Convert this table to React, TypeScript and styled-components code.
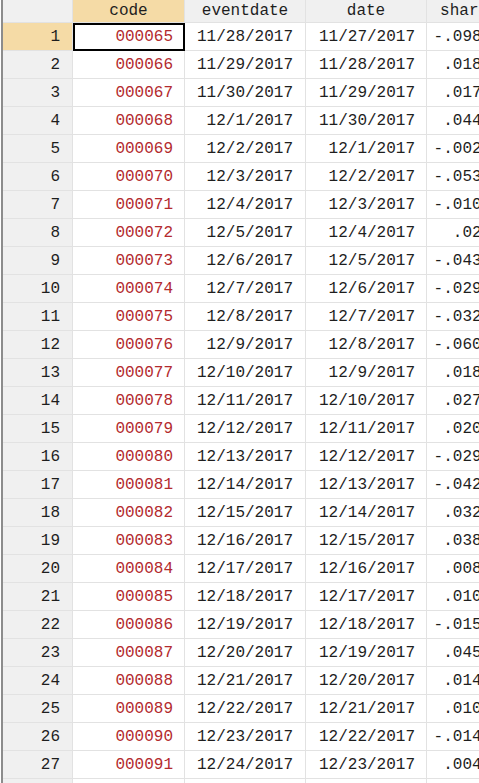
import React from "react";
import styled, { createGlobalStyle } from "styled-components";

const GlobalStyle = createGlobalStyle`
  html, body {
    margin: 0;
    padding: 0;
    background: #ffffff;
    overflow: hidden;
  }
`;

interface Row {
  code: string;
  eventdate: string;
  date: string;
  share: string;
}

const rows: Row[] = [
  { code: "000065", eventdate: "11/28/2017", date: "11/27/2017", share: "-.0987231" },
  { code: "000066", eventdate: "11/29/2017", date: "11/28/2017", share: ".0184562" },
  { code: "000067", eventdate: "11/30/2017", date: "11/29/2017", share: ".0172935" },
  { code: "000068", eventdate: "12/1/2017", date: "11/30/2017", share: ".0441207" },
  { code: "000069", eventdate: "12/2/2017", date: "12/1/2017", share: "-.0023914" },
  { code: "000070", eventdate: "12/3/2017", date: "12/2/2017", share: "-.0538126" },
  { code: "000071", eventdate: "12/4/2017", date: "12/3/2017", share: "-.0106473" },
  { code: "000072", eventdate: "12/5/2017", date: "12/4/2017", share: ".021875" },
  { code: "000073", eventdate: "12/6/2017", date: "12/5/2017", share: "-.0431592" },
  { code: "000074", eventdate: "12/7/2017", date: "12/6/2017", share: "-.0297341" },
  { code: "000075", eventdate: "12/8/2017", date: "12/7/2017", share: "-.0325817" },
  { code: "000076", eventdate: "12/9/2017", date: "12/8/2017", share: "-.0604129" },
  { code: "000077", eventdate: "12/10/2017", date: "12/9/2017", share: ".0189364" },
  { code: "000078", eventdate: "12/11/2017", date: "12/10/2017", share: ".0275108" },
  { code: "000079", eventdate: "12/12/2017", date: "12/11/2017", share: ".0203647" },
  { code: "000080", eventdate: "12/13/2017", date: "12/12/2017", share: "-.0292184" },
  { code: "000081", eventdate: "12/14/2017", date: "12/13/2017", share: "-.0426713" },
  { code: "000082", eventdate: "12/15/2017", date: "12/14/2017", share: ".0321956" },
  { code: "000083", eventdate: "12/16/2017", date: "12/15/2017", share: ".0384102" },
  { code: "000084", eventdate: "12/17/2017", date: "12/16/2017", share: ".0086235" },
  { code: "000085", eventdate: "12/18/2017", date: "12/17/2017", share: ".0102874" },
  { code: "000086", eventdate: "12/19/2017", date: "12/18/2017", share: "-.0153692" },
  { code: "000087", eventdate: "12/20/2017", date: "12/19/2017", share: ".0452318" },
  { code: "000088", eventdate: "12/21/2017", date: "12/20/2017", share: ".0147529" },
  { code: "000089", eventdate: "12/22/2017", date: "12/21/2017", share: ".0106381" },
  { code: "000090", eventdate: "12/23/2017", date: "12/22/2017", share: "-.0148206" },
  { code: "000091", eventdate: "12/24/2017", date: "12/23/2017", share: ".0049173" },
  { code: "000092", eventdate: "12/25/2017", date: "12/24/2017", share: ".0061248" },
];

const columns = [
  { key: "code", width: 112 },
  { key: "eventdate", width: 121 },
  { key: "date", width: 121 },
  { key: "sharechg", width: 104 },
];

const Frame = styled.div`
  margin-left: 1px;
  border-left: 2px solid #8c8c8c;
  height: 783px;
  font-family: "Liberation Mono", "Courier New", monospace;
  font-size: 16px;
  color: #1e1e1e;
`;

const GridRow = styled.div<{ header?: boolean }>`
  display: flex;
  height: ${(p) => (p.header ? "23px" : "28px")};
  width: max-content;
`;

const Cell = styled.div<{ width: number; pad?: number; selected?: boolean }>`
  box-sizing: border-box;
  width: ${(p) => p.width}px;
  flex: none;
  display: flex;
  align-items: center;
  justify-content: flex-end;
  padding-right: ${(p) => p.pad ?? 10}px;
  border-right: 1px solid #e2e2e2;
  border-bottom: 1px solid #e2e2e2;
  white-space: pre;
  overflow: hidden;
  outline: ${(p) => (p.selected ? "2px solid #000" : "none")};
  outline-offset: -2px;
`;

const HeadCell = styled(Cell)<{ active?: boolean }>`
  justify-content: center;
  padding: 0 0 1px;
  background: ${(p) => (p.active ? "#f5dba6" : "#f0f0f0")};
`;

const RowNum = styled(Cell)<{ active?: boolean }>`
  padding-right: 12px;
  background: ${(p) => (p.active ? "#f5dba6" : "#f0f0f0")};
`;

const CodeCell = styled(Cell)`
  color: #b32a2e;
`;

const App: React.FC = () => {
  return (
    <>
      <GlobalStyle />
      <Frame>
        <GridRow header>
          <HeadCell width={70} />
          {columns.map((col) => (
            <HeadCell key={col.key} width={col.width} active={col.key === "code"}>
              {col.key}
            </HeadCell>
          ))}
        </GridRow>
        {rows.map((row, i) => (
          <GridRow key={row.code}>
            <RowNum width={70} active={i === 0}>
              {i + 1}
            </RowNum>
            <CodeCell width={112} pad={11} selected={i === 0}>
              {row.code}
            </CodeCell>
            <Cell width={121} pad={12}>{row.eventdate}</Cell>
            <Cell width={121} pad={11}>{row.date}</Cell>
            <Cell width={104}>{row.share}</Cell>
          </GridRow>
        ))}
      </Frame>
    </>
  );
};

export default App;
